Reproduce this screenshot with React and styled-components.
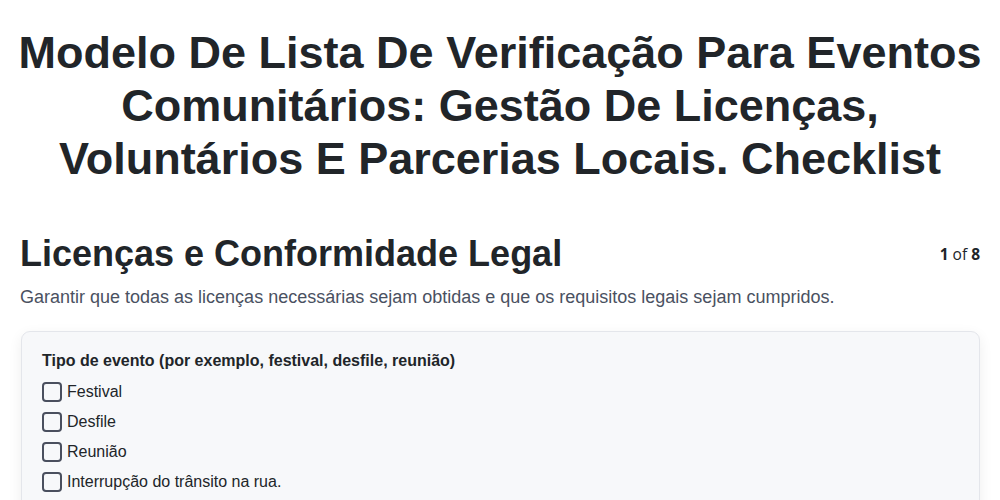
import React from "react";
import styled, { createGlobalStyle } from "styled-components";

const Global = createGlobalStyle`
  html, body { margin: 0; padding: 0; background: #ffffff; }
  body { font-family: "Liberation Sans", Arial, sans-serif; color: #212529; }
`;

const Page = styled.div`
  padding: 26px 20px 40px;
`;

const Title = styled.h1`
  margin: 0 -10px;
  text-align: center;
  font-size: 45px;
  line-height: 53px;
  font-weight: 700;
  color: #212529;
`;

const SectionHead = styled.div`
  display: flex;
  justify-content: space-between;
  align-items: center;
  margin-top: 48px;
`;

const SectionTitle = styled.h2`
  margin: 0;
  font-size: 36px;
  line-height: 42px;
  font-weight: 700;
  color: #212529;
`;

const Counter = styled.div`
  font-family: "Open Sans", sans-serif;
  font-size: 15.5px;
  line-height: 22px;
  color: #212529;
  b { font-weight: 700; }
`;

const Subtitle = styled.p`
  margin: 9px 0 0;
  font-size: 18px;
  line-height: 26px;
  color: #4a5161;
`;

const Card = styled.div`
  margin-top: 21px;
  margin-left: 1px;
  background: #f7f8fa;
  border: 1px solid #e4e6eb;
  border-radius: 9px;
  box-shadow: 0 4px 14px rgba(0, 0, 0, 0.07);
  padding: 19px 20px 30px;
`;

const Question = styled.div`
  font-size: 16px;
  line-height: 20px;
  font-weight: 700;
  color: #212529;
  margin-bottom: 6px;
`;

const Options = styled.div`
  display: flex;
  flex-direction: column;
`;

const Option = styled.label`
  display: flex;
  align-items: center;
  gap: 5px;
  height: 30px;
  font-size: 16px;
  color: #212529;
  cursor: pointer;
`;

const Box = styled.span`
  width: 16px;
  height: 16px;
  border: 2px solid #4a4f5e;
  border-radius: 4px;
  flex-shrink: 0;
`;

const options = [
  "Festival",
  "Desfile",
  "Reunião",
  "Interrupção do trânsito na rua.",
];

export default function App() {
  return (
    <>
      <Global />
      <Page>
        <Title>
          Modelo De Lista De Verificação Para Eventos Comunitários: Gestão De
          Licenças, Voluntários E Parcerias Locais. Checklist
        </Title>
        <SectionHead>
          <SectionTitle>Licenças e Conformidade Legal</SectionTitle>
          <Counter>
            <b>1</b> of <b>8</b>
          </Counter>
        </SectionHead>
        <Subtitle>
          Garantir que todas as licenças necessárias sejam obtidas e que os
          requisitos legais sejam cumpridos.
        </Subtitle>
        <Card>
          <Question>Tipo de evento (por exemplo, festival, desfile, reunião)</Question>
          <Options>
            {options.map((o) => (
              <Option key={o}>
                <Box />
                {o}
              </Option>
            ))}
          </Options>
        </Card>
      </Page>
    </>
  );
}
